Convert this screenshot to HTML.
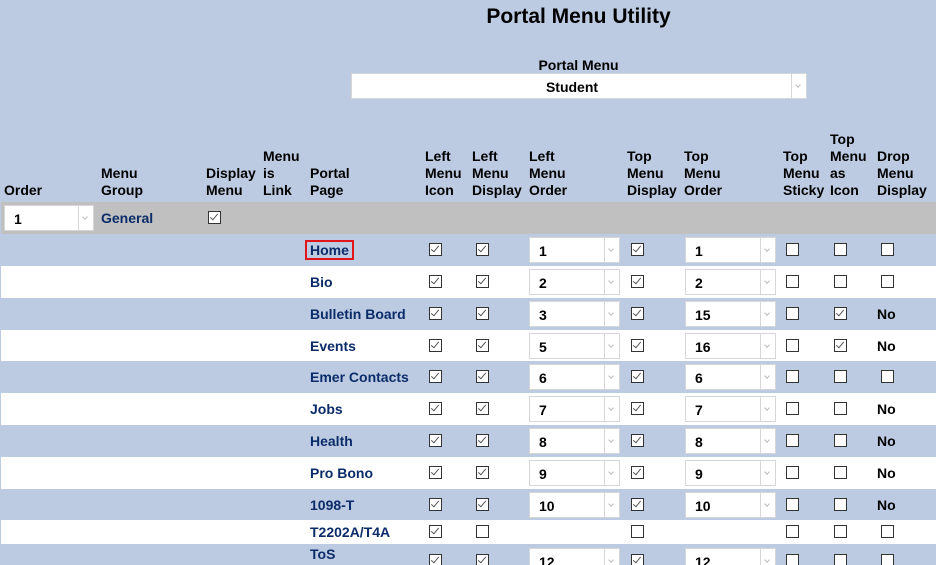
<!DOCTYPE html>
<html><head><meta charset="utf-8">
<style>
html,body{margin:0;padding:0;width:936px;height:565px;overflow:hidden;background:#bccbe2;font-family:"Liberation Sans",Arial,sans-serif;font-weight:bold;font-size:14px;color:#000;position:relative}
.a{position:absolute}
.h{position:absolute;line-height:17px;font-size:14px}
.row{position:absolute;left:1px;right:0}
.cb{position:absolute;width:11px;height:11px;border:1px solid #333;background:#fff}
.cb.c::after{content:"";position:absolute;left:3px;top:0px;width:3px;height:7px;border:solid #555;border-width:0 1.2px 1.2px 0;transform:rotate(40deg)}
.sel{position:absolute;background:#fff;border:1px solid #d6d6d6;box-sizing:border-box;height:26px}
.sel span{position:absolute;left:9px;top:5px;font-size:14px}
.sel i{position:absolute;right:0;top:0;bottom:0;width:14px;border-left:1px solid #d6d6d6}
.sel i::after{content:"";position:absolute;left:4px;top:9px;width:3px;height:3px;border:solid #bbb;border-width:0 1px 1px 0;transform:rotate(45deg)}
.pp{position:absolute;left:310px;color:#0b2c68;font-size:14px}
.no{position:absolute;left:877px;font-size:14px}
</style></head><body>
<div class="a" style="left:0;width:1157px;top:5px;text-align:center;font-size:21px">Portal Menu Utility</div>
<div class="a" style="left:351px;width:455px;top:57px;text-align:center;font-size:14px">Portal Menu</div>
<div class="sel" style="left:351px;top:73px;width:456px"><span style="left:0;right:14px;text-align:center">Student</span><i></i></div>

<div class="h" style="left:4px;top:182px">Order</div>
<div class="h" style="left:101px;top:165px">Menu<br>Group</div>
<div class="h" style="left:206px;top:165px">Display<br>Menu</div>
<div class="h" style="left:263px;top:148px">Menu<br>is<br>Link</div>
<div class="h" style="left:310px;top:165px">Portal<br>Page</div>
<div class="h" style="left:425px;top:148px">Left<br>Menu<br>Icon</div>
<div class="h" style="left:472px;top:148px">Left<br>Menu<br>Display</div>
<div class="h" style="left:529px;top:148px">Left<br>Menu<br>Order</div>
<div class="h" style="left:627px;top:148px">Top<br>Menu<br>Display</div>
<div class="h" style="left:684px;top:148px">Top<br>Menu<br>Order</div>
<div class="h" style="left:783px;top:148px">Top<br>Menu<br>Sticky</div>
<div class="h" style="left:830px;top:131px">Top<br>Menu<br>as<br>Icon</div>
<div class="h" style="left:877px;top:148px">Drop<br>Menu<br>Display</div>

<div class="a" style="left:1px;right:0;top:202px;height:32px;background:#c0c0c0"></div>
<div class="sel" style="left:4px;top:205px;width:90px"><span>1</span><i></i></div>
<div class="a" style="left:101px;top:210px;color:#0b2c68">General</div>
<div class="cb c" style="left:208px;top:211px"></div>

<div id="rows"></div>
<script>
var d=[
["Home",1,1,"1",1,"1",0,0,0,234,32],
["Bio",1,1,"2",1,"2",0,0,0,266,32],
["Bulletin Board",1,1,"3",1,"15",0,1,"No",298,32],
["Events",1,1,"5",1,"16",0,1,"No",330,31],
["Emer Contacts",1,1,"6",1,"6",0,0,0,361,32],
["Jobs",1,1,"7",1,"7",0,0,"No",393,32],
["Health",1,1,"8",1,"8",0,0,"No",425,32],
["Pro Bono",1,1,"9",1,"9",0,0,"No",457,32],
["1098-T",1,1,"10",1,"10",0,0,"No",489,31],
["T2202A/T4A",1,0,null,0,null,0,0,0,520,24],
["ToS",1,1,"12",1,"12",0,0,0,544,32]];
var h="";
d.forEach(function(r,i){
 var t=r[9],ht=r[10],bg=i%2?"#fff":"#bccbe2";
 h+='<div class="row" style="top:'+t+'px;height:'+ht+'px;background:'+bg+'"></div>';
 var cy=t+Math.round(ht/2)-7;
 var ty=t+Math.round(ht/2)-8;
 if(r[0]=="ToS"){ty=t+2;cy=t+10;}
 if(i==0)h+='<div class="pp" style="top:'+(ty-2)+'px;left:305px;border:2px solid #e0161b;padding:0 3px;line-height:16px">Home</div>';
 else h+='<div class="pp" style="top:'+ty+'px">'+r[0]+'</div>';
 function cb(x,c){h+='<div class="cb'+(c?' c':'')+'" style="left:'+x+'px;top:'+cy+'px"></div>';}
 cb(429,r[1]);cb(476,r[2]);
 if(r[3]!=null)h+='<div class="sel" style="left:529px;top:'+(cy-6)+'px;width:91px"><span>'+r[3]+'</span><i></i></div>';
 cb(631,r[4]);
 if(r[5]!=null)h+='<div class="sel" style="left:685px;top:'+(cy-6)+'px;width:91px"><span>'+r[5]+'</span><i></i></div>';
 cb(786,0);cb(834,r[7]);
 if(r[8])h+='<div class="no" style="top:'+ty+'px">No</div>';else cb(881,0);
});
document.getElementById("rows").innerHTML=h;
</script>
</body></html>
